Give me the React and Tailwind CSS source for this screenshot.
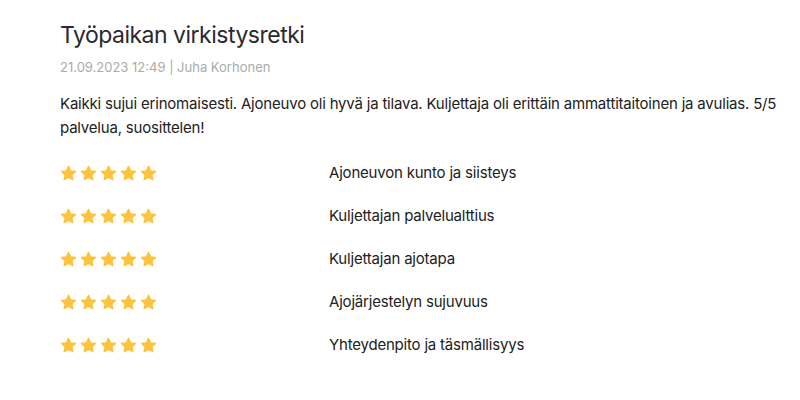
import React from 'react';

const ratings = [
  'Ajoneuvon kunto ja siisteys',
  'Kuljettajan palvelualttius',
  'Kuljettajan ajotapa',
  'Ajojärjestelyn sujuvuus',
  'Yhteydenpito ja täsmällisyys',
];

function Star() {
  return (
    <svg width="17" height="17" viewBox="0 0 24 24" className="shrink-0">
      <path
        d="M12 1.8l3.05 6.4 6.95.9-5.1 4.85 1.3 6.95L12 17.5l-6.2 3.4 1.3-6.95L2 9.1l6.95-.9z"
        fill="#fcc43e"
        stroke="#fcc43e"
        strokeWidth="1.8"
        strokeLinejoin="round"
      />
    </svg>
  );
}

export default function App() {
  return (
    <div className="w-[800px] h-[400px] bg-white pl-[60px] pr-[8px] pt-[20px] text-[#2a2a2e]" style={{ fontFamily: 'Inter, "Noto Sans", sans-serif' }}>
      <h1 className="text-[23px] leading-[30px] font-normal tracking-[-0.5px]">Työpaikan virkistysretki</h1>
      <p className="mt-[8px] text-[13px] leading-[18px] text-[#ababab]">21.09.2023 12:49 | Juha Korhonen</p>
      <p className="mt-[16px] text-[15px] leading-[24px] tracking-[-0.2px] text-[#222]">
        Kaikki sujui erinomaisesti. Ajoneuvo oli hyvä ja tilava. Kuljettaja oli erittäin ammattitaitoinen ja avulias. 5/5 palvelua, suosittelen!
      </p>
      <div className="mt-[12px] flex flex-col">
        {ratings.map((r) => (
          <div key={r} className="flex items-center h-[43px]">
            <div className="flex gap-[3px] w-[269px]">
              {[0, 1, 2, 3, 4].map((i) => (
                <Star key={i} />
              ))}
            </div>
            <span className="text-[15px] tracking-[-0.2px] text-[#222]">{r}</span>
          </div>
        ))}
      </div>
    </div>
  );
}
